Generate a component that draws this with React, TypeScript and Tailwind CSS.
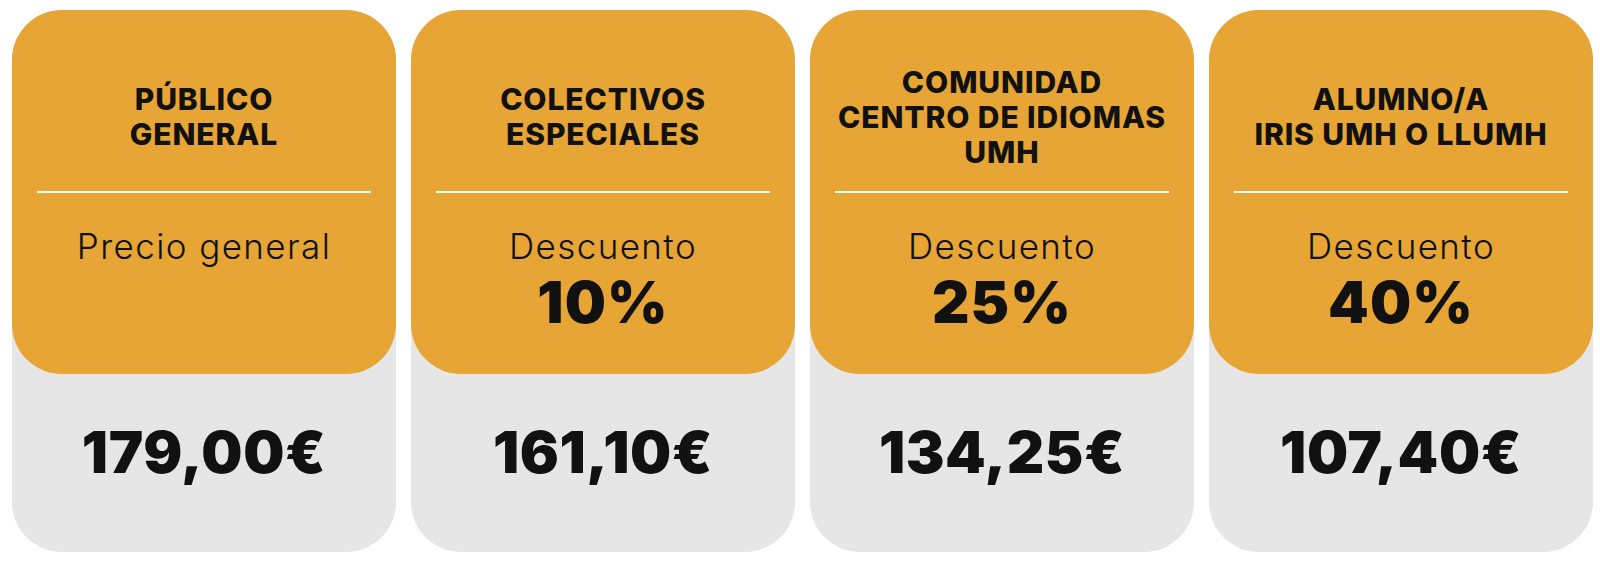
const plans = [
  { title: ["PÚBLICO", "GENERAL"], label: "Precio general", pct: "", price: "179,00€" },
  { title: ["COLECTIVOS", "ESPECIALES"], label: "Descuento", pct: "10%", price: "161,10€" },
  { title: ["COMUNIDAD", "CENTRO DE IDIOMAS", "UMH"], label: "Descuento", pct: "25%", price: "134,25€" },
  { title: ["ALUMNO/A", "IRIS UMH O LLUMH"], label: "Descuento", pct: "40%", price: "107,40€" },
]

const PlanCard = ({ plan }: { plan: (typeof plans)[number] }) => {
  return (
    <div className="flex h-[542px] flex-col rounded-[50px] bg-[#e6e6e6]">
      <div className="flex h-[364px] flex-col rounded-[50px] bg-[#e6a535] pt-[42px]">
        <div className="flex h-[130px] flex-col items-center justify-center text-center text-[30px] leading-[35px] font-extrabold tracking-[0.03em] text-[#111]">
          {plan.title.map((line) => (
            <span key={line}>{line}</span>
          ))}
        </div>
        <hr className="mx-[25px] mt-[9px] border-0 border-t-2 border-white" />
        <div className="mt-[33px] text-center text-[35px] leading-[40px] font-light tracking-[0.04em] text-[#111]">
          {plan.label}
        </div>
        {plan.pct && (
          <div className="mt-[6px] text-center text-[58px] leading-[60px] font-black tracking-[0.02em] text-[#111]">
            {plan.pct}
          </div>
        )}
      </div>
      <div className="flex flex-1 items-center justify-center pb-[22px]">
        <span className="text-[58px] leading-none font-black tracking-[0.01em] text-[#111]">{plan.price}</span>
      </div>
    </div>
  )
}

const App = () => {
  return (
    <main className="h-[562px] w-[1600px] bg-white pt-[10px] pr-[7px] pl-[12px] font-['Inter',sans-serif]">
      <div className="grid grid-cols-4 gap-[15px]">
        {plans.map((plan) => (
          <PlanCard key={plan.price} plan={plan} />
        ))}
      </div>
    </main>
  )
}

export default App
